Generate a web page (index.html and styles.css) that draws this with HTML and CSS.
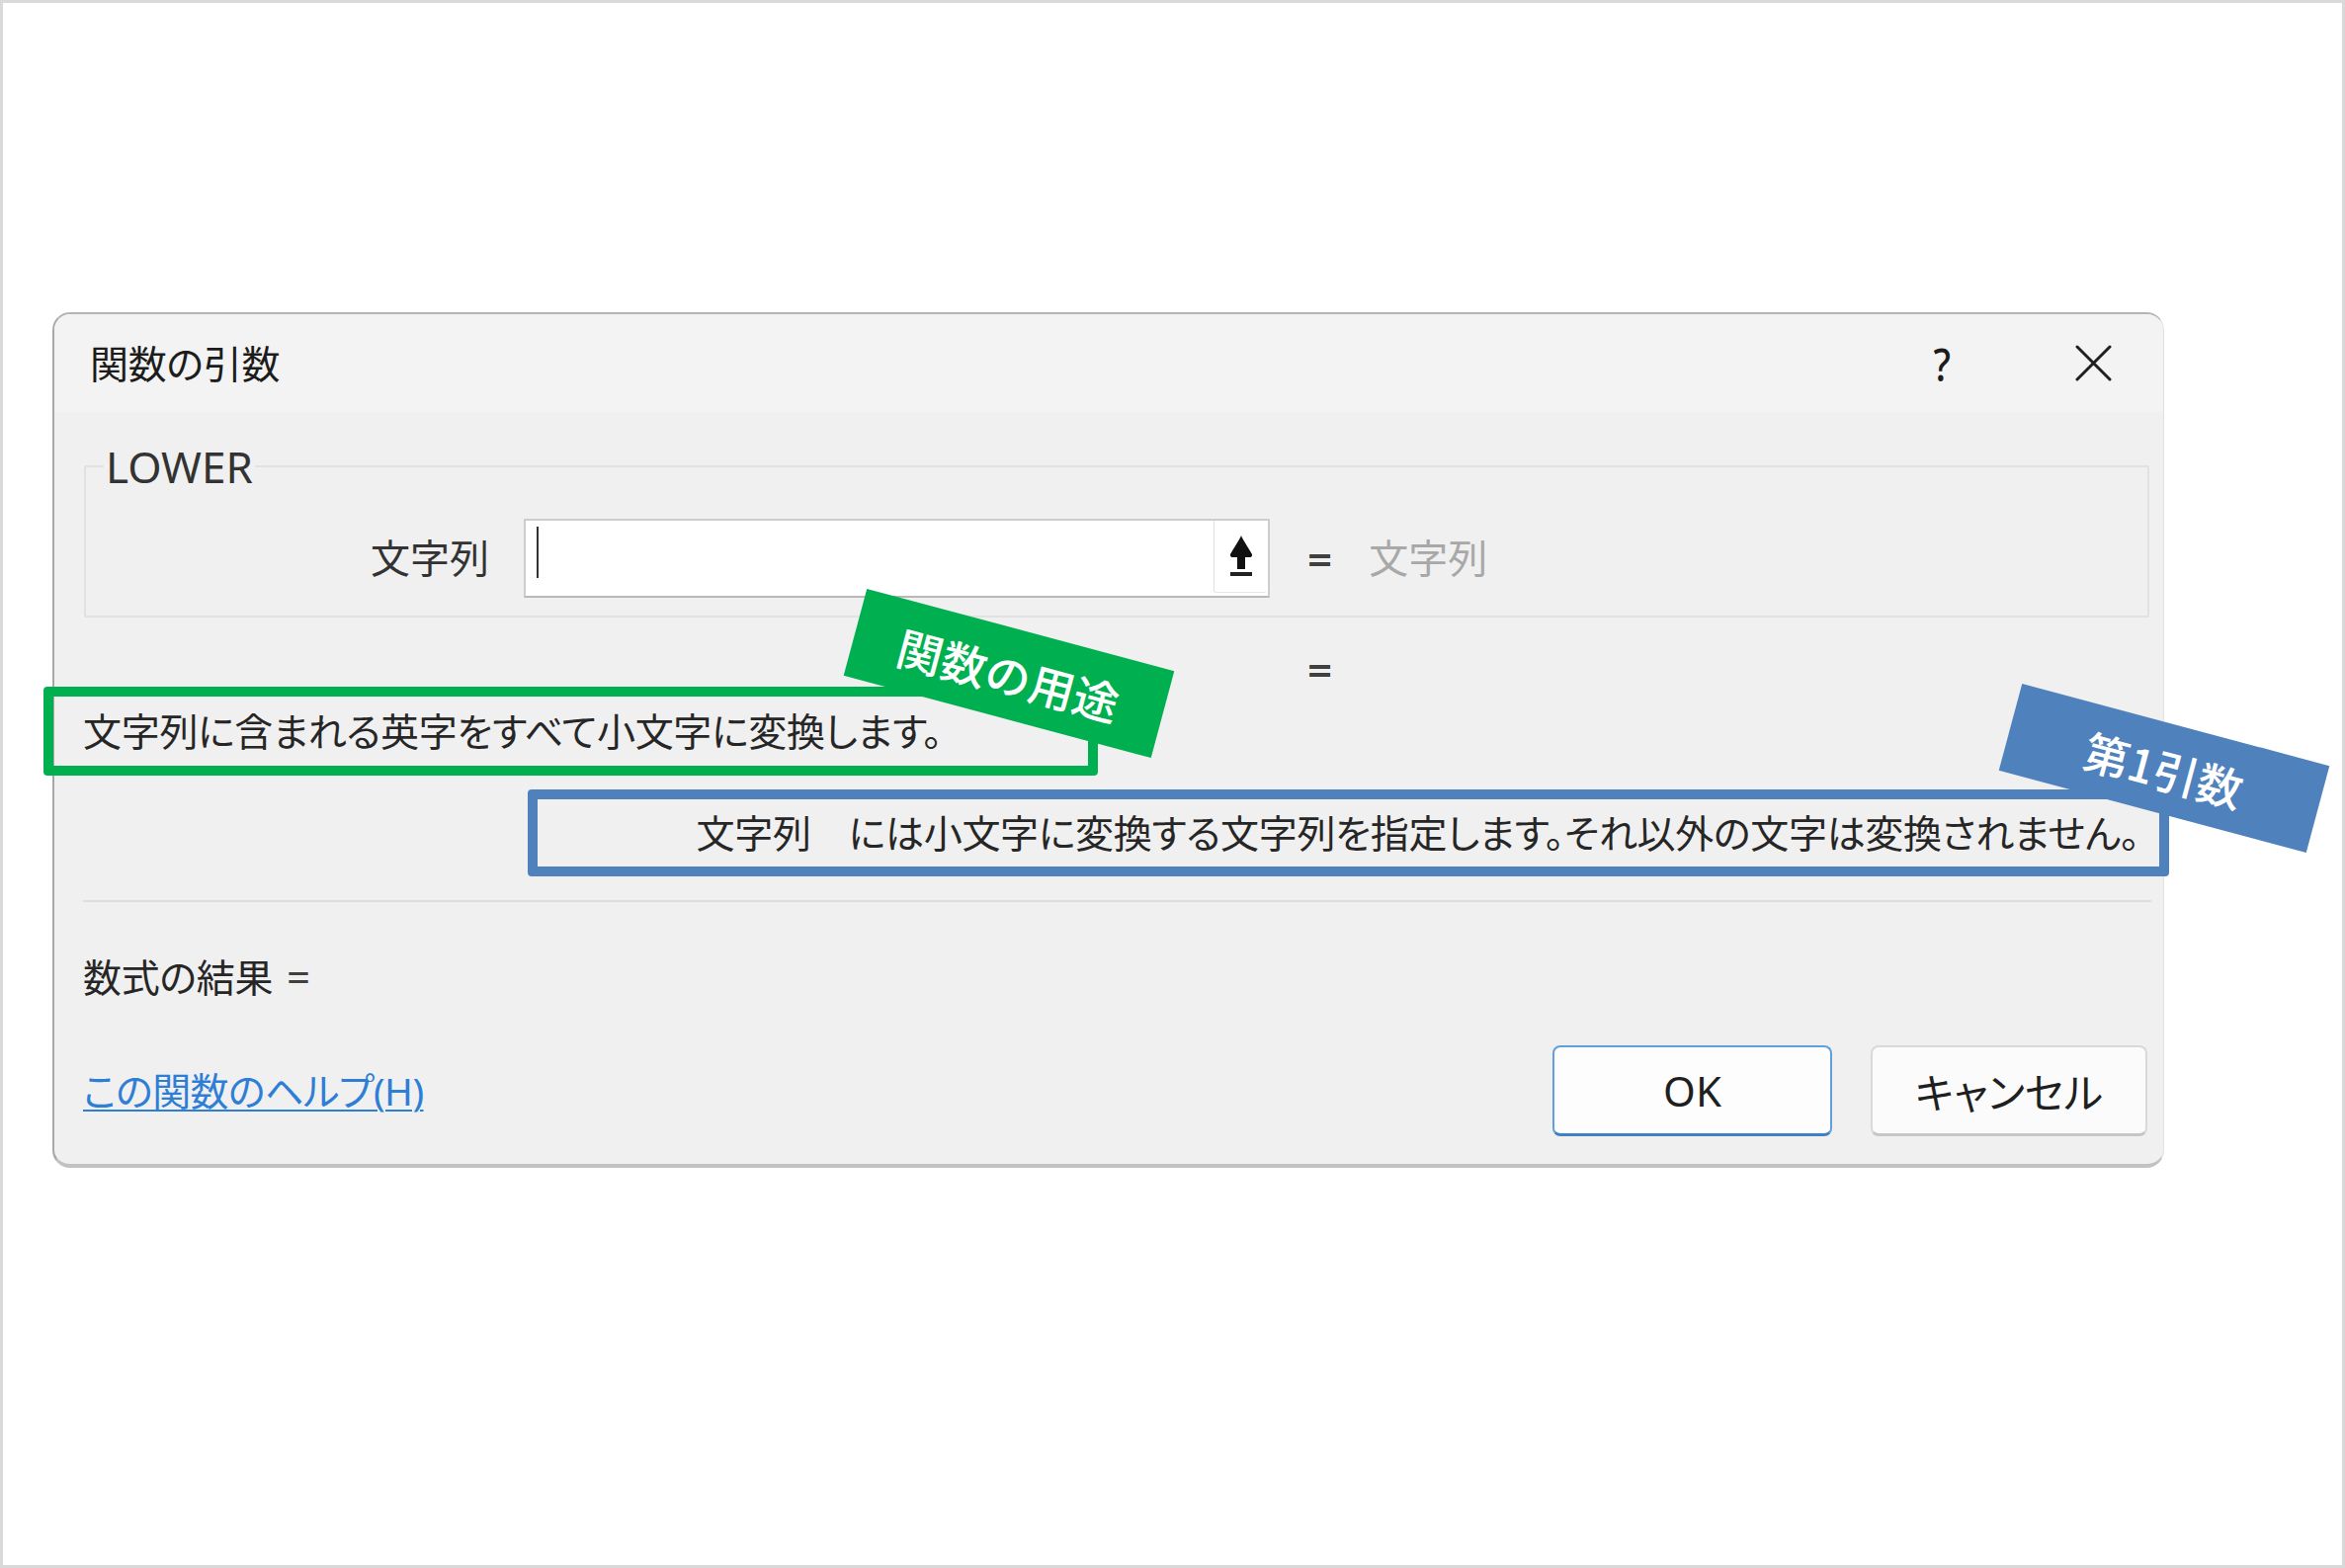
FILE: index.html
```html
<!DOCTYPE html>
<html lang="ja">
<head>
<meta charset="utf-8">
<title>関数の引数</title>
<link rel="stylesheet" href="styles.css">
</head>
<body>
<div class="dialog">
  <div class="titlebar">
    <div class="title">関数の引数</div>
    <div class="title-actions">
      <span class="help">?</span>
      <svg class="close" width="37" height="37" viewBox="0 0 37 37" aria-label="閉じる">
        <path d="M2 2 L35 35 M35 2 L2 35" stroke="#1f1f1f" stroke-width="3" fill="none" stroke-linecap="round"/>
      </svg>
    </div>
  </div>
  <div class="content">
    <fieldset class="group">
      <legend class="group-title">LOWER</legend>
      <div class="arg-row">
        <span class="arg-label">文字列</span>
        <div class="arg-input">
          <span class="caret"></span>
          <span class="collapse-btn">
            <svg width="24" height="42" viewBox="0 0 24 42">
              <path d="M12 0 C13 3 19 12 23 19 C23.5 20.5 22.5 22 21 22 L16 22 L16 34 L8 34 L8 22 L3 22 C1.5 22 0.5 20.5 1 19 C5 12 11 3 12 0 Z" fill="#111"/>
              <rect x="1" y="37" width="22" height="4" fill="#222"/>
            </svg>
          </span>
        </div>
        <span class="eq">=</span>
        <span class="arg-value">文字列</span>
      </div>
    </fieldset>
    <div class="eq-row"><span class="eq">=</span></div>
    <div class="note note-green">
      <p class="desc">文字列に含まれる英字をすべて小文字に変換します。</p>
      <span class="tag tag-green">関数の用途</span>
    </div>
    <div class="note note-blue">
      <p class="arg-desc"><span class="arg-name">文字列</span>には小文字に変換する文字列を指定します。それ以外の文字は変換されません。</p>
      <span class="tag tag-blue">第1引数</span>
    </div>
    <hr class="sep">
    <div class="result">数式の結果 <span class="result-eq">=</span></div>
    <div class="footer">
      <a class="help-link" href="#">この関数のヘルプ(H)</a>
      <div class="buttons">
        <button class="btn btn-ok" type="button">OK</button>
        <button class="btn btn-cancel" type="button">キャンセル</button>
      </div>
    </div>
  </div>
</div>
</body>
</html>
```

FILE: styles.css
```css
html {
  margin: 0;
  padding: 0;
}

body {
  margin: 0;
  width: 2373px;
  height: 1587px;
  box-sizing: border-box;
  border: 3px solid #d9d9d9;
  background: #ffffff;
  overflow: hidden;
  font-family: "Noto Sans", "Noto Sans CJK JP", sans-serif;
  font-feature-settings: "palt";
  color: #262626;
  padding-top: 313px;
  padding-left: 50px;
}

.dialog {
  position: relative;
  width: 2137px;
  box-sizing: border-box;
  background: #f0f0f0;
  border-top: 2px solid #b4b4b4;
  border-left: 2px solid #a8a8a8;
  border-right: 1px solid #e2e2e2;
  border-bottom: 4px solid #c2c2c2;
  border-radius: 18px;
}

.titlebar {
  display: flex;
  align-items: center;
  justify-content: space-between;
  height: 99px;
  padding: 0 52px 0 36px;
  background: #f3f3f3;
  border-radius: 16px 16px 0 0;
}

.title {
  font-size: 39px;
  letter-spacing: -0.3px;
  line-height: 50px;
  color: #1c1c1c;
}

.title-actions {
  display: flex;
  align-items: center;
  gap: 124px;
}

.help {
  font-size: 46px;
  line-height: 50px;
  color: #1c1c1c;
  font-weight: 500;
  transform: scaleX(0.85);
}

.close {
  display: block;
}

.content {
  padding: 0 12px 28px 29px;
}

.group {
  margin: 30px 2px 0 1px;
  padding: 28px 0 18px 0;
  border: 2px solid #e2e2e2;
  min-width: 0;
}

.group-title {
  margin-left: 18px;
  padding: 0 2px;
  font-size: 44px;
  line-height: 50px;
  color: #333333;
}

.arg-row {
  display: flex;
  align-items: center;
}

.arg-label {
  width: 408px;
  text-align: right;
  font-size: 40px;
  line-height: 50px;
  color: #333333;
}

.arg-input {
  display: flex;
  align-items: flex-start;
  box-sizing: border-box;
  width: 755px;
  height: 80px;
  margin-left: 35px;
  padding-left: 11px;
  padding-right: 1px;
  background: #ffffff;
  border: 2px solid #cdcdcd;
  border-bottom-color: #b8b8b8;
}

.caret {
  width: 2px;
  height: 52px;
  margin-top: 6px;
  background: #333333;
}

.collapse-btn {
  display: flex;
  align-items: center;
  justify-content: center;
  margin-left: auto;
  width: 54px;
  height: 73px;
  box-sizing: border-box;
  background: #ffffff;
  border-left: 1px solid #dedede;
  border-bottom: 1px solid #e6e6e6;
  border-radius: 0 0 3px 3px;
}

.collapse-btn svg {
  display: block;
}

.eq {
  font-size: 44px;
  line-height: 36px;
  color: #404040;
  font-weight: 600;
}

.arg-row .eq {
  margin-left: 38px;
}

.arg-value {
  margin-left: 37px;
  font-size: 40px;
  line-height: 50px;
  color: #a8a8a8;
}

.eq-row {
  margin-top: 34px;
  height: 36px;
  padding-left: 1239px;
  display: flex;
  align-items: center;
}

.note {
  position: relative;
  box-sizing: border-box;
  display: flex;
  align-items: center;
  border-radius: 4px;
}

.note-green {
  margin-left: -40px;
  width: 1067px;
  height: 90px;
  padding-left: 30px;
  border: 10px solid #00b050;
}

.note-blue {
  margin-top: 14px;
  margin-left: 450px;
  width: 1661px;
  height: 88px;
  padding-right: 20px;
  justify-content: flex-end;
  border: 10px solid #4f81bd;
}

.desc,
.arg-desc {
  margin: 0;
  font-size: 39px;
  letter-spacing: -0.3px;
  line-height: 50px;
  color: #262626;
  white-space: nowrap;
}

.arg-name {
  margin-right: 38px;
}

.tag {
  position: absolute;
  z-index: 2;
  width: 322px;
  height: 91px;
  display: flex;
  align-items: center;
  justify-content: center;
  color: #ffffff;
  font-family: "Noto Sans CJK JP", sans-serif;
  font-feature-settings: normal;
  font-size: 46px;
  font-weight: 500;
  line-height: 1;
  transform: rotate(15deg);
}

.tag-green {
  left: 806px;
  top: -69px;
  background: #00b050;
}

.tag-blue {
  left: 1485px;
  top: -77px;
  background: #4f81bd;
}

.sep {
  margin: 24px 0 0 0;
  height: 2px;
  border: 0;
  background: #dedede;
}

.result {
  margin-top: 50px;
  font-size: 39px;
  letter-spacing: -0.3px;
  line-height: 50px;
  color: #262626;
}

.result-eq {
  margin-left: 4px;
  font-size: 42px;
  color: #404040;
}

.footer {
  margin-top: 44px;
  display: flex;
  align-items: center;
  justify-content: space-between;
  padding-right: 4px;
}

.help-link {
  font-size: 39px;
  letter-spacing: -0.6px;
  line-height: 50px;
  color: #2f7ed6;
  text-decoration: underline;
  text-decoration-thickness: 2px;
  text-underline-offset: 4px;
}

.buttons {
  display: flex;
  gap: 39px;
}

.btn {
  box-sizing: border-box;
  height: 92px;
  margin: 0;
  padding: 0;
  font-family: "Noto Sans", "Noto Sans CJK JP", sans-serif;
  font-feature-settings: "palt";
  font-size: 42px;
  color: #1f1f1f;
  border-radius: 8px;
}

.btn-ok {
  width: 283px;
  background: #fdfdfd;
  border: 2px solid #62a0dc;
  border-bottom: 3px solid #3f80c6;
}

.btn-cancel {
  width: 280px;
  background: #fbfbfb;
  border: 2px solid #d9d9d9;
  border-bottom: 3px solid #c6c6c6;
}
```
